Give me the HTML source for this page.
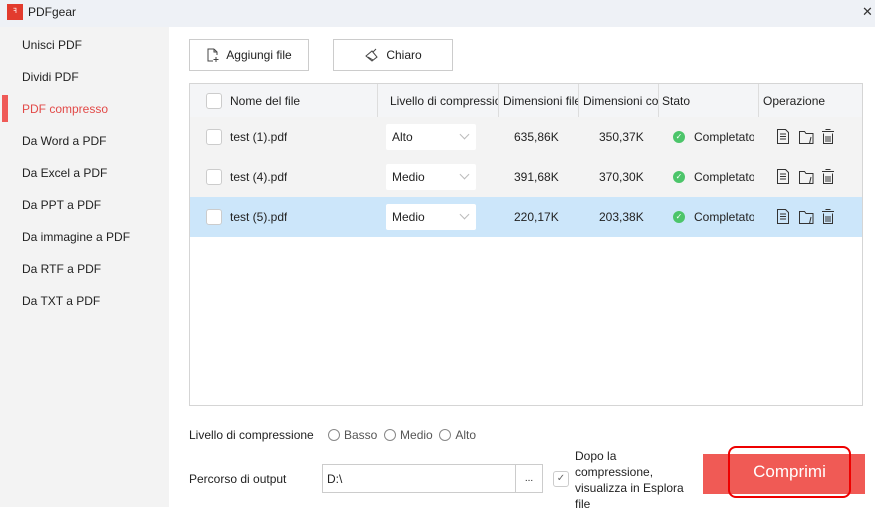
<!DOCTYPE html>
<html><head><meta charset="utf-8"><style>
*{margin:0;padding:0;box-sizing:border-box}
body{width:875px;height:507px;overflow:hidden;font-family:"Liberation Sans",sans-serif;font-size:12px;color:#222;background:#fff;position:relative}
.abs{position:absolute}
.title{left:0;top:0;width:875px;height:27px;background:#eef1f6}
.side{left:0;top:27px;width:169px;height:480px;background:#f3f3f3}
.side div{position:absolute;left:22px;font-size:12px}
.btn{border:1px solid #ccc;background:#fff;height:32px;top:39px;font-size:12px;display:flex;align-items:center;justify-content:center;gap:6px}
.tbl{left:189px;top:83px;width:674px;height:323px;border:1px solid #d5d5d5;background:#fff}
.hdr{left:0;top:0;width:672px;height:33px;background:#f4f5f7}
.row{left:0;width:672px;height:40px;background:#f3f3f3}
.cb{width:16px;height:16px;border:1px solid #ccc;border-radius:3px;background:#fff;position:absolute}
.sel{position:absolute;left:196px;width:90px;height:26px;background:#fff;border-radius:2px}
.sel span{position:absolute;left:6px;top:6px}
.sel i{position:absolute;right:8px;top:7px;width:7px;height:7px;border-right:1px solid #bbb;border-bottom:1px solid #bbb;transform:rotate(45deg)}
.t{position:absolute;white-space:nowrap;overflow:hidden}
.vd{position:absolute;top:0;width:1px;height:33px;background:#ddd}
.ok{position:absolute;width:12px;height:12px;border-radius:50%;background:#4cc56a;color:#fff;font-size:8px;text-align:center;line-height:12px}
.rad{display:inline-block;width:12px;height:12px;border:1px solid #888;border-radius:50%;vertical-align:-2px;margin-right:4px}
</style></head><body>
<div class="abs title">
 <div class="abs" style="left:7px;top:4px;width:16px;height:16px;background:#e23b2e;color:#fff;font-size:7px;line-height:16px;text-align:center">ꟻ</div>
 <div class="abs" style="left:28px;top:5px;font-size:12px">PDFgear</div>
 <div class="abs" style="left:862px;top:4px;font-size:13px;color:#333">✕</div>
</div>
<div class="abs side">
 <div style="top:11px">Unisci PDF</div>
 <div style="top:43px">Dividi PDF</div>
 <div style="top:75px;color:#e24a48">PDF compresso</div>
 <span style="position:absolute;left:2px;top:68px;width:6px;height:27px;background:#ef5a57"></span>
 <div style="top:107px">Da Word a PDF</div>
 <div style="top:139px">Da Excel a PDF</div>
 <div style="top:171px">Da PPT a PDF</div>
 <div style="top:203px">Da immagine a PDF</div>
 <div style="top:235px">Da RTF a PDF</div>
 <div style="top:267px">Da TXT a PDF</div>
</div>
<div class="abs btn" style="left:189px;width:120px"><svg width="14" height="14" viewBox="0 0 14 14" fill="none" stroke="#444"><path d="M8 1H2v12h5M8 1l3 3v3M8 1v3h3M10 9v5M7.5 11.5h5"/></svg>Aggiungi file</div>
<div class="abs btn" style="left:333px;width:120px"><svg width="16" height="14" viewBox="0 0 16 14" fill="none" stroke="#444"><path d="M2 8l6-5 5 6-5 4zM9 4l3-3M4 9l5 3"/></svg>Chiaro</div>
<div class="abs tbl">
 <div class="abs hdr">
  <div class="cb" style="left:16px;top:9px"></div>
  <div class="t" style="left:40px;top:10px">Nome del file</div>
  <div class="vd" style="left:187px"></div>
  <div class="t" style="left:200px;top:10px;width:108px">Livello di compressione</div>
  <div class="vd" style="left:308px"></div>
  <div class="t" style="left:313px;top:10px;width:75px">Dimensioni file</div>
  <div class="vd" style="left:388px"></div>
  <div class="t" style="left:393px;top:10px;width:75px">Dimensioni compresse</div>
  <div class="vd" style="left:468px"></div>
  <div class="t" style="left:472px;top:10px">Stato</div>
  <div class="vd" style="left:568px"></div>
  <div class="t" style="left:573px;top:10px">Operazione</div>
 </div>
 <div class="abs row" style="top:33px">
  <div class="cb" style="left:16px;top:12px"></div><div class="t" style="left:40px;top:13px">test (1).pdf</div>
  <div class="sel" style="top:7px"><span>Alto</span><i></i></div>
  <div class="t" style="left:324px;top:13px">635,86K</div><div class="t" style="left:409px;top:13px">350,37K</div>
  <div class="ok" style="left:483px;top:14px">✓</div><div class="t" style="left:504px;top:13px;width:60px">Completato</div>
 </div>
 <div class="abs row" style="top:73px">
  <div class="cb" style="left:16px;top:12px"></div><div class="t" style="left:40px;top:13px">test (4).pdf</div>
  <div class="sel" style="top:7px"><span>Medio</span><i></i></div>
  <div class="t" style="left:324px;top:13px">391,68K</div><div class="t" style="left:409px;top:13px">370,30K</div>
  <div class="ok" style="left:483px;top:14px">✓</div><div class="t" style="left:504px;top:13px;width:60px">Completato</div>
 </div>
 <div class="abs row" style="top:113px;background:#cce6fa">
  <div class="cb" style="left:16px;top:12px"></div><div class="t" style="left:40px;top:13px">test (5).pdf</div>
  <div class="sel" style="top:7px"><span>Medio</span><i></i></div>
  <div class="t" style="left:324px;top:13px">220,17K</div><div class="t" style="left:409px;top:13px">203,38K</div>
  <div class="ok" style="left:483px;top:14px">✓</div><div class="t" style="left:504px;top:13px;width:60px">Completato</div>
 </div>
 <svg class="abs" style="left:586px;top:33px" width="70" height="120" fill="none" stroke="#333" stroke-width="1">
  <g id="ic"><path d="M1.5 12.5v14h11v-11l-3-3zM4 17h6M4 19.5h6M4 22h6"/><path d="M23.5 14.5h5l1.5 2h7v10h-13.5z M35 20l-1.5 6.5"/><path d="M46 14.5h12M49.5 12.5h5M47.5 16.5v10h9v-10M50 19v6M52 19v6M54 19v6"/></g>
  <use href="#ic" y="40"/><use href="#ic" y="80"/>
 </svg>
</div>
<div class="abs" style="left:189px;top:428px">Livello di compressione</div>
<div class="abs" style="left:328px;top:428px;color:#555"><span class="rad"></span>Basso &nbsp;<span class="rad"></span>Medio &nbsp;<span class="rad"></span>Alto</div>
<div class="abs" style="left:189px;top:472px">Percorso di output</div>
<div class="abs" style="left:322px;top:464px;width:194px;height:29px;border:1px solid #ccc;padding:7px 4px">D:\</div>
<div class="abs" style="left:515px;top:464px;width:28px;height:29px;border:1px solid #ccc;text-align:center;line-height:27px;font-size:10px">...</div>
<div class="abs" style="left:553px;top:471px;width:16px;height:16px;border:1px solid #ccc;border-radius:3px;font-size:10px;text-align:center;line-height:14px;color:#666">✓</div>
<div class="abs" style="left:575px;top:448px;line-height:16px;font-size:12px">Dopo la<br>compressione,<br>visualizza in Esplora<br>file</div>
<div class="abs" style="left:703px;top:454px;width:162px;height:40px;background:#f05a55"></div>
<div class="abs" style="left:728px;top:446px;width:123px;height:52px;border:2px solid #e00;border-radius:8px;color:#fff;font-size:17px;text-align:center;line-height:48px">Comprimi</div>
</body></html>
